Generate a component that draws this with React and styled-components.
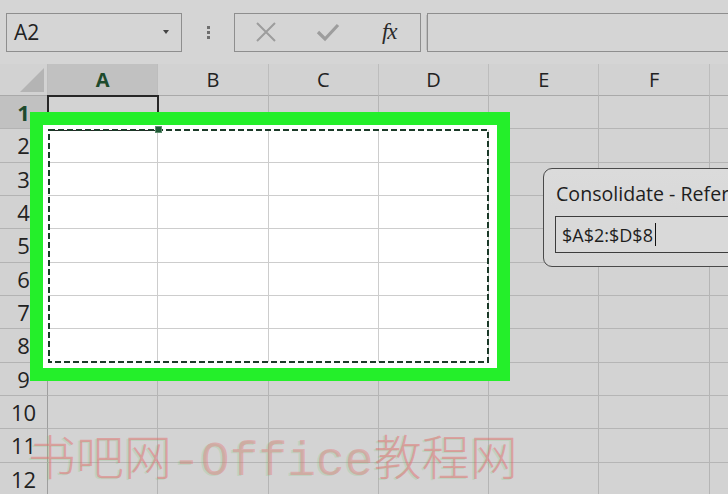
import React from "react";
import styled, { createGlobalStyle } from "styled-components";

const Global = createGlobalStyle`
  html, body { margin: 0; padding: 0; background: #d3d3d3; overflow: hidden; }
  * { box-sizing: border-box; }
`;

const Page = styled.div`
  position: relative;
  width: 728px;
  height: 494px;
  overflow: hidden;
  background: #d3d3d3;
  font-family: "Open Sans", "Noto Sans", sans-serif;
`;

const Toolbar = styled.div`
  display: flex;
  align-items: center;
  height: 64px;
  padding: 0 0 0 6px;
  background: #d5d5d5;
`;

const NameBox = styled.div`
  display: flex;
  align-items: center;
  justify-content: space-between;
  width: 176px;
  height: 39px;
  padding: 0 12px 0 7px;
  border: 1px solid #8e8e8e;
  font-size: 21px;
  color: #222;
`;

const Caret = styled.span`
  width: 0;
  height: 0;
  border-left: 3.5px solid transparent;
  border-right: 3.5px solid transparent;
  border-top: 4px solid #444;
`;

const Dots = styled.div`
  width: 52px;
  display: flex;
  flex-direction: column;
  align-items: center;
  gap: 2px;
  & > span { width: 3px; height: 3px; background: #6e6e6e; }
`;

const FxGroup = styled.div`
  display: flex;
  align-items: center;
  width: 187px;
  height: 39px;
  border: 1px solid #8e8e8e;
`;

const FxSlot = styled.div`
  width: 62px;
  display: flex;
  justify-content: center;
  align-items: center;
  color: ${(p) => (p.$dim ? "#9d9d9d" : "#2a2a2a")};
`;

const FxText = styled.span`
  font-family: "Liberation Serif", "DejaVu Serif", serif;
  font-style: italic;
  font-size: 23px;
  letter-spacing: -1px;
`;

const FormulaInput = styled.div`
  flex: 1;
  height: 39px;
  margin-left: 6px;
  border: 1px solid #8e8e8e;
  border-right: none;
  box-shadow: -3px 0 0 -2px #bdbdbd;
`;

const Sheet = styled.div`
  display: grid;
  grid-template-columns: 48px repeat(7, 110.3px);
  grid-template-rows: 32px repeat(12, 33.33px);
`;

const Corner = styled.div`
  position: relative;
  background: #d2d2d2;
  border-right: 1px solid #bdbdbd;
  border-bottom: 1px solid #a9a9a9;
  &::after {
    content: "";
    position: absolute;
    right: 3px;
    bottom: 3px;
    width: 0;
    height: 0;
    border-left: 24px solid transparent;
    border-bottom: 24px solid #b4b4b4;
  }
`;

const ColHead = styled.div`
  display: flex;
  align-items: center;
  justify-content: center;
  background: ${(p) => (p.$active ? "#c1c1c1" : "#d2d2d2")};
  border-right: 1px solid #bdbdbd;
  border-bottom: 1px solid #a9a9a9;
  font-size: 20px;
  font-weight: ${(p) => (p.$active ? 700 : 400)};
  color: ${(p) => (p.$active ? "#1d4a2c" : "#222")};
`;

const RowHead = styled.div`
  display: flex;
  align-items: center;
  justify-content: center;
  background: ${(p) => (p.$active ? "#c1c1c1" : "#d2d2d2")};
  border-right: 1px solid #9e9e9e;
  border-bottom: 1px solid #b3b3b3;
  font-size: 22px;
  font-weight: ${(p) => (p.$active ? 700 : 400)};
  color: ${(p) => (p.$active ? "#1d4a2c" : "#222")};
`;

const Cell = styled.div`
  background: ${(p) => (p.$white ? "#ffffff" : "#d3d3d3")};
  border-right: 1px solid ${(p) => (p.$white ? "#cdcdcd" : "#b5b5b5")};
  border-bottom: 1px solid ${(p) => (p.$white ? "#cdcdcd" : "#b5b5b5")};
`;

const Selected = styled.div`
  position: absolute;
  left: 47px;
  top: 95px;
  width: 112px;
  height: 36px;
  border: 2px solid #262626;
`;

const Frame = styled.div`
  position: absolute;
  left: 30px;
  top: 112px;
  width: 480px;
  height: 269px;
  border: 13px solid #24ef2a;
  box-shadow: inset 5px 5px 0 #ffffff, inset -8px -6px 0 #ffffff;
`;

const Ants = styled.svg`
  position: absolute;
  left: 47px;
  top: 128px;
  overflow: visible;
`;

const Handle = styled.div`
  position: absolute;
  left: 155px;
  top: 126px;
  width: 7px;
  height: 7px;
  background: #1f5a36;
  border: 1px solid #5f8f70;
`;

const Dialog = styled.div`
  position: absolute;
  left: 543px;
  top: 168px;
  width: 230px;
  height: 99px;
  border: 1px solid #4a4a4a;
  border-radius: 9px;
  background: linear-gradient(180deg, #dbdbdb 0%, #d6d6d6 100%);
  padding: 12px 0 0 12px;
  display: flex;
  flex-direction: column;
  gap: 9px;
  overflow: hidden;
`;

const DialogTitle = styled.div`
  font-size: 19.6px;
  line-height: 26px;
  color: #1e1e1e;
  white-space: nowrap;
`;

const RefInput = styled.div`
  display: flex;
  align-items: center;
  height: 37px;
  margin-left: -1px;
  padding-left: 6px;
  border: 1px solid #3c3c3c;
  background: #d9d9d9;
  font-size: 18px;
  color: #1e1e1e;
  white-space: nowrap;
`;

const Cursor = styled.span`
  display: inline-block;
  width: 1.5px;
  height: 23px;
  margin-left: 2px;
  background: #111;
`;

const Watermark = styled.div`
  position: absolute;
  left: 28px;
  top: 428px;
  font-size: 48px;
  line-height: 52px;
  white-space: nowrap;
  color: rgba(228, 110, 110, 0.5);
  font-family: "Liberation Mono", "Noto Sans CJK SC", monospace;
  text-shadow: -2px 1px 0 rgba(110, 200, 110, 0.2);
  pointer-events: none;
`;

const Latin = styled.span`
  font-family: "Liberation Mono", monospace;
  font-weight: 400;
  color: rgba(228, 120, 120, 0.42);
`;

const Cjk = styled.span`
  font-family: "Noto Sans CJK SC", sans-serif;
  font-weight: 300;
`;

const COLS = ["A", "B", "C", "D", "E", "F", ""];

export default function App() {
  const rows = Array.from({ length: 12 }, (_, i) => i + 1);
  return (
    <Page>
      <Global />
      <Toolbar>
        <NameBox>
          <span>A2</span>
          <Caret />
        </NameBox>
        <Dots>
          <span />
          <span />
          <span />
        </Dots>
        <FxGroup>
          <FxSlot $dim>
            <svg width="22" height="22" viewBox="0 0 22 22">
              <path d="M2 2 L20 20 M20 2 L2 20" stroke="currentColor" strokeWidth="2" fill="none" />
            </svg>
          </FxSlot>
          <FxSlot $dim>
            <svg width="24" height="20" viewBox="0 0 24 20">
              <path d="M2 10 L9 17 L22 3" stroke="currentColor" strokeWidth="3.2" fill="none" />
            </svg>
          </FxSlot>
          <FxSlot>
            <FxText>fx</FxText>
          </FxSlot>
        </FxGroup>
        <FormulaInput />
      </Toolbar>
      <Sheet>
        <Corner />
        {COLS.map((c, ci) => (
          <ColHead key={ci} $active={c === "A"}>
            {c}
          </ColHead>
        ))}
        {rows.map((r) => (
          <React.Fragment key={r}>
            <RowHead $active={r === 1}>{r}</RowHead>
            {COLS.map((c, ci) => (
              <Cell key={ci} $white={r >= 2 && r <= 8 && ci <= 3} />
            ))}
          </React.Fragment>
        ))}
      </Sheet>
      <Selected />
      <Frame />
      <Ants width="443" height="236">
        <rect x="2" y="2" width="439" height="232" fill="none" stroke="#1b3a28" strokeWidth="2" strokeDasharray="6 3" />
      </Ants>
      <Handle />
      <Dialog>
        <DialogTitle>Consolidate - Reference</DialogTitle>
        <RefInput>
          $A$2:$D$8
          <Cursor />
        </RefInput>
      </Dialog>
      <Watermark>
        <Cjk>书吧网</Cjk>
        <Latin>-Office</Latin>
        <Cjk>教程网</Cjk>
      </Watermark>
    </Page>
  );
}
